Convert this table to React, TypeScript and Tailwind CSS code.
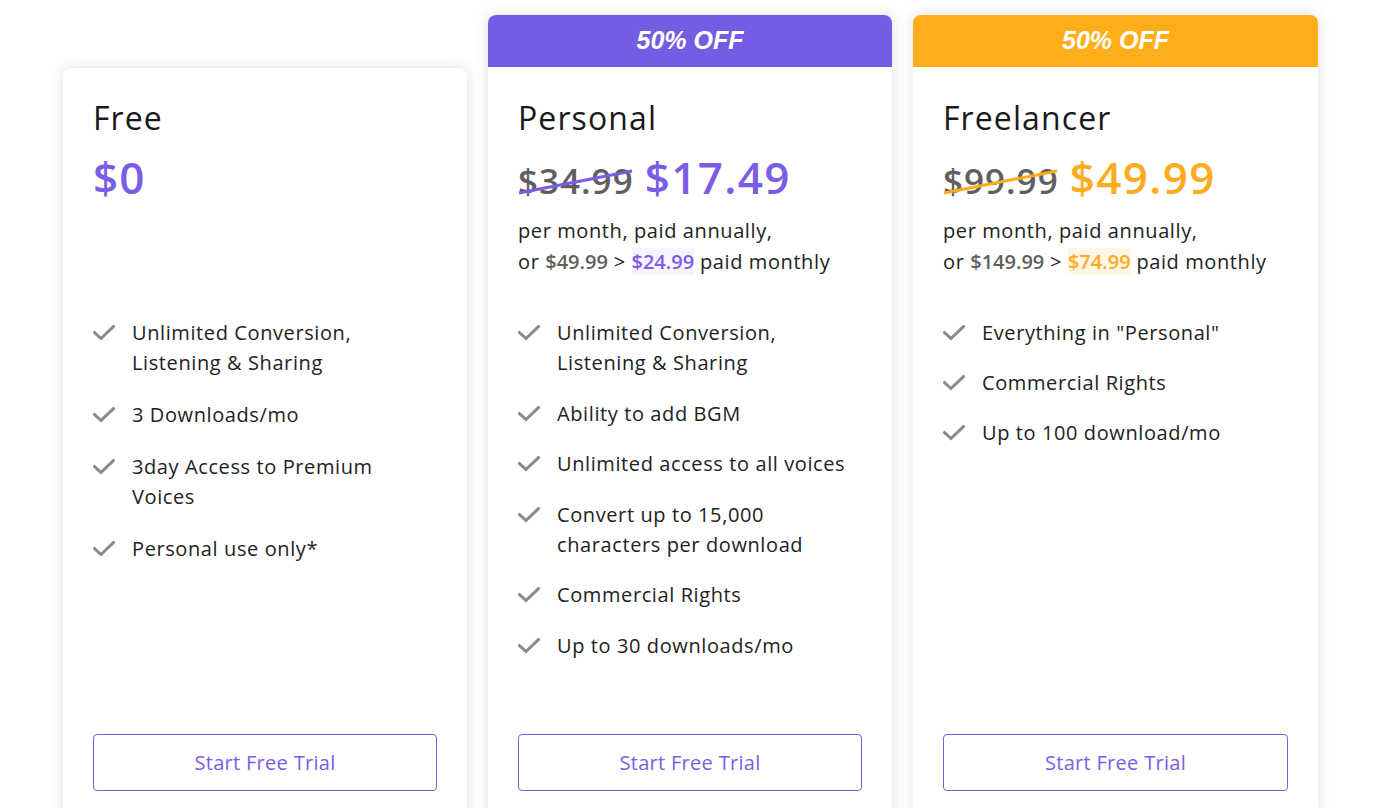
import React from "react";

const PURPLE = "#7a5de6";

function Check() {
  return (
    <svg width="22" height="16" viewBox="0 0 22 16" className="shrink-0 mt-[7px]">
      <path d="M1.5 7.5 L8 13.5 L20.5 1.5" fill="none" stroke="#8a8a8a" strokeWidth="3" strokeLinecap="square" />
    </svg>
  );
}

function Features({ items, gapClass }: { items: string[][]; gapClass: string }) {
  return (
    <ul className={"flex flex-col " + gapClass}>
      {items.map((lines, i) => (
        <li key={i} className="flex items-start gap-[17px]">
          <Check />
          <span className="text-[20px] leading-[30px] tracking-[0.6px] text-[#222]">
            {lines.map((l, j) => (
              <span key={j} className="block">{l}</span>
            ))}
          </span>
        </li>
      ))}
    </ul>
  );
}

function Button() {
  return (
    <button className="mt-auto h-[57px] w-full rounded-[4px] border border-[#7a5de6] text-[20px] tracking-[0.3px] text-[#7a5de6] bg-white">
      Start Free Trial
    </button>
  );
}

function Strike({ price, color }: { price: string; color: string }) {
  return (
    <span className="relative inline-block text-[35px] font-semibold tracking-[1px] text-[#5f5f5f] leading-[56px]">
      {price}
      <svg className="absolute left-0 top-0" width="116" height="56" viewBox="0 0 116 56">
        <line x1="1" y1="40" x2="114" y2="18" stroke={color} strokeWidth="3" />
      </svg>
    </span>
  );
}

export default function App() {
  return (
    <div className="w-[1385px] h-[808px] overflow-hidden bg-white" style={{ fontFamily: "'Open Sans', sans-serif" }}>
      <div className="flex items-start gap-[21px] pl-[63px] pt-[15px]">
        {/* Free */}
        <div className="mt-[53px] w-[404px] rounded-[8px] bg-white shadow-[0_0_14px_rgba(0,0,0,0.13)]">
          <div className="flex h-[753px] flex-col px-[30px] pt-[30px] pb-[30px]">
            <div className="text-[32px] leading-[40px] tracking-[1.1px] text-[#1a1a1a]">Free</div>
            <div className="h-[180px] pt-[11px]">
              <div className="text-[44px] font-semibold leading-[56px] tracking-[1px] text-[#7a5de6]">$0</div>
            </div>
            <Features
              gapClass="gap-[22px]"
              items={[
                ["Unlimited Conversion,", "Listening & Sharing"],
                ["3 Downloads/mo"],
                ["3day Access to Premium", "Voices"],
                ["Personal use only*"],
              ]}
            />
            <Button />
          </div>
        </div>

        {/* Personal */}
        <div className="w-[404px] rounded-[8px] bg-white shadow-[0_0_14px_rgba(0,0,0,0.13)]">
          <div className="flex h-[52px] items-center justify-center rounded-t-[8px] bg-[#745de3] text-[25px] font-bold italic text-white" style={{ fontFamily: "'Liberation Sans', Arial, sans-serif" }}>
            50% OFF
          </div>
          <div className="flex h-[754px] flex-col px-[30px] pt-[31px] pb-[30px]">
            <div className="text-[32px] leading-[40px] tracking-[1.1px] text-[#1a1a1a]">Personal</div>
            <div className="h-[180px] pt-[11px]">
              <div className="flex items-baseline gap-[11px]">
                <Strike price="$34.99" color={PURPLE} />
                <span className="text-[44px] font-semibold leading-[56px] tracking-[1.4px] text-[#7a5de6]">$17.49</span>
              </div>
              <div className="mt-[6px] text-[20px] leading-[31px] tracking-[0.6px] text-[#222]">
                <div>per month, paid annually,</div>
                <div>
                  or <span className="font-semibold tracking-[0px] text-[#5f5f5f]">$49.99</span> &gt;{" "}
                  <span className="bg-[#f7f3ff] font-semibold tracking-[0px] text-[#7a5de6]">$24.99</span> paid monthly
                </div>
              </div>
            </div>
            <Features
              gapClass="gap-[20.5px]"
              items={[
                ["Unlimited Conversion,", "Listening & Sharing"],
                ["Ability to add BGM"],
                ["Unlimited access to all voices"],
                ["Convert up to 15,000", "characters per download"],
                ["Commercial Rights"],
                ["Up to 30 downloads/mo"],
              ]}
            />
            <Button />
          </div>
        </div>

        {/* Freelancer */}
        <div className="w-[405px] rounded-[8px] bg-white shadow-[0_0_14px_rgba(0,0,0,0.13)]">
          <div className="flex h-[52px] items-center justify-center rounded-t-[8px] bg-[#ffae1a] text-[25px] font-bold italic text-white" style={{ fontFamily: "'Liberation Sans', Arial, sans-serif" }}>
            50% OFF
          </div>
          <div className="flex h-[754px] flex-col px-[30px] pt-[31px] pb-[30px]">
            <div className="text-[32px] leading-[40px] tracking-[1.1px] text-[#1a1a1a]">Freelancer</div>
            <div className="h-[180px] pt-[11px]">
              <div className="flex items-baseline gap-[11px]">
                <Strike price="$99.99" color="#ffab1a" />
                <span className="text-[44px] font-semibold leading-[56px] tracking-[1.4px] text-[#ffab1e]">$49.99</span>
              </div>
              <div className="mt-[6px] text-[20px] leading-[31px] tracking-[0.6px] text-[#222]">
                <div>per month, paid annually,</div>
                <div>
                  or <span className="font-semibold tracking-[0px] text-[#5f5f5f]">$149.99</span> &gt;{" "}
                  <span className="bg-[#fff6e6] font-semibold tracking-[0px] text-[#ffab1e]">$74.99</span> paid monthly
                </div>
              </div>
            </div>
            <Features
              gapClass="gap-[20px]"
              items={[
                ["Everything in \"Personal\""],
                ["Commercial Rights"],
                ["Up to 100 download/mo"],
              ]}
            />
            <Button />
          </div>
        </div>
      </div>
    </div>
  );
}
